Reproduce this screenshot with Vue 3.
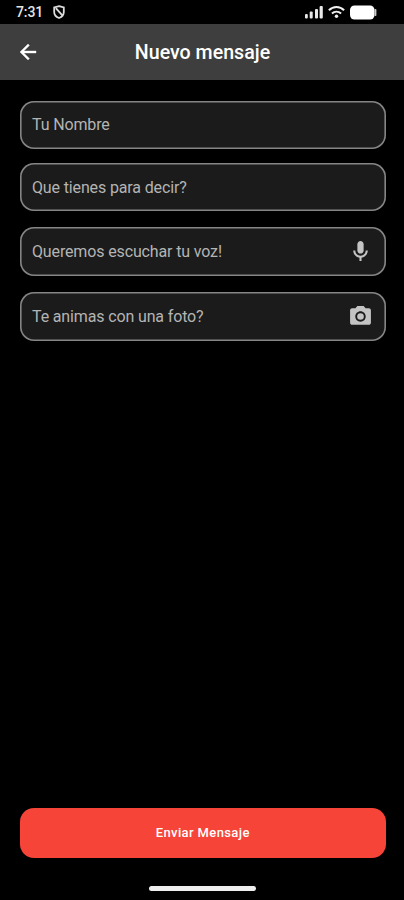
<script setup>
const fields = [
  { label: 'Tu Nombre', kind: 'name' },
  { label: 'Que tienes para decir?', kind: 'text' },
  { label: 'Queremos escuchar tu voz!', kind: 'voice' },
  { label: 'Te animas con una foto?', kind: 'photo' },
]
</script>

<template>
  <div class="screen">
    <div class="status">
      <span class="time">7:31</span>
      <svg class="shield" width="12" height="14" viewBox="0 0 12 14" fill="none" stroke="#ddd" stroke-width="1.8">
        <path d="M6 1.200 10.800 2.400V7c0 3-2 5-4.800 6C3.200 12 1.200 10 1.200 7V2.400z" />
        <path d="M2.800 3.200 9.400 10.400" />
      </svg>
      <svg class="signal" width="18" height="14" viewBox="0 0 18 14" fill="#e8e8e8">
        <rect x="0" y="9" width="2.800" height="4.500" rx="1" />
        <rect x="4.700" y="6.500" width="3" height="7" rx="1" />
        <rect x="10" y="4" width="3" height="9.500" rx="1" />
        <rect x="14.600" y="1" width="3.200" height="12.500" rx="1" />
      </svg>
      <svg class="wifi" width="17" height="14" viewBox="0 0 17 14" fill="none" stroke="#f0f0f0" stroke-width="2">
        <path d="M.9 5.300C5.200 1 11.800 1 16.100 5.300" />
        <path d="M3.900 8.500c2.700-2.500 6.500-2.500 9.200 0" />
        <circle cx="8.500" cy="11.300" r="1.700" fill="#f0f0f0" stroke="none" />
      </svg>
      <svg class="battery" width="27" height="15" viewBox="0 0 27 15" fill="#fff">
        <rect x="0" y=".5" width="24.500" height="14" rx="4.500" />
        <rect x="24.500" y="4" width="1.900" height="7" rx=".8" fill="#ccc" />
      </svg>
    </div>

    <header class="bar">
      <svg class="back" width="24" height="24" viewBox="0 0 24 24" fill="#fff" stroke="#fff" stroke-width=".4">
        <path d="M20 11H7.830l5.590-5.590L12 4l-8 8 8 8 1.410-1.410L7.830 13H20v-2z" />
      </svg>
      <h1>Nuevo mensaje</h1>
    </header>

    <main class="form">
      <div v-for="f in fields" :key="f.kind" class="field" :class="f.kind">
        <span>{{ f.label }}</span>
        <svg v-if="f.kind === 'voice'" width="25" height="25" viewBox="0 0 24 24" fill="#c4c4c4">
          <path d="M12 14c1.660 0 3-1.340 3-3V5c0-1.660-1.340-3-3-3S9 3.340 9 5v6c0 1.660 1.340 3 3 3z" />
          <path d="M17 11c0 2.760-2.240 5-5 5s-5-2.240-5-5H5c0 3.530 2.610 6.430 6 6.920V21h2v-3.080c3.390-.49 6-3.390 6-6.920h-2z" />
        </svg>
        <svg v-if="f.kind === 'photo'" width="25" height="25" viewBox="0 0 24 24" fill="#c4c4c4">
          <circle cx="12" cy="12" r="3.200" />
          <path d="M9 2 7.170 4H4c-1.100 0-2 .9-2 2v12c0 1.100.9 2 2 2h16c1.100 0 2-.9 2-2V6c0-1.100-.9-2-2-2h-3.170L15 2H9zm3 15c-2.760 0-5-2.240-5-5s2.240-5 5-5 5 2.240 5 5-2.240 5-5 5z" />
        </svg>
      </div>
    </main>

    <button class="send">Enviar Mensaje</button>
    <div class="home"></div>
  </div>
</template>

<style>
body { background: #000; }
</style>

<style scoped>
.screen {
  box-sizing: border-box;
  width: 404px;
  height: 900px;
  display: flex;
  flex-direction: column;
  background: #000;
  font-family: Roboto, sans-serif;
  overflow: hidden;
}
.status {
  flex: none;
  height: 24px;
  box-sizing: border-box;
  padding: 0 27px 0 16px;
  display: flex;
  align-items: center;
}
.time {
  font-size: 14px;
  font-weight: 500;
  line-height: 24px;
  letter-spacing: -0.1px;
  color: #e4e4e4;
}
.shield { margin-left: 10px; }
.signal { margin-left: auto; }
.wifi { margin-left: 5px; }
.battery { margin-left: 5px; }
.bar {
  flex: none;
  height: 56px;
  box-sizing: border-box;
  padding: 0 16px;
  display: grid;
  grid-template-columns: 24px 1fr 24px;
  align-items: center;
  background: #3e3e3e;
}
h1 {
  margin: 0;
  padding: 1px 0 0 1px;
  text-align: center;
  font-size: 19.600px;
  font-weight: 500;
  line-height: 28px;
  color: #fff;
}
.form {
  padding: 21px 18.500px 0 20px;
  display: flex;
  flex-direction: column;
}
.field {
  box-sizing: border-box;
  height: 48px;
  padding: 0 13px 0 12px;
  display: flex;
  align-items: center;
  justify-content: space-between;
  box-shadow: inset 0 0 0 1.600px #858585;
  border-radius: 14px;
  background: #1b1b1b;
  color: #b4b4b4;
  font-size: 16px;
  line-height: 20px;
  letter-spacing: -0.140px;
}
.text { margin-top: 14px; padding-top: 2px; }
.voice { margin-top: 16px; height: 49px; }
.photo { margin-top: 16px; height: 49px; }
.send {
  flex: none;
  height: 50px;
  margin: auto 18.500px 0 20px;
  padding: 1px 0 0;
  border: 0;
  border-radius: 14px;
  background: #f64438;
  color: #fff;
  font: 500 13px/20px Roboto, sans-serif;
  letter-spacing: 0.380px;
}
.home {
  flex: none;
  width: 107px;
  height: 5px;
  margin: 28.500px 0 9px 149px;
  border-radius: 3px;
  background: #eee;
}
</style>
